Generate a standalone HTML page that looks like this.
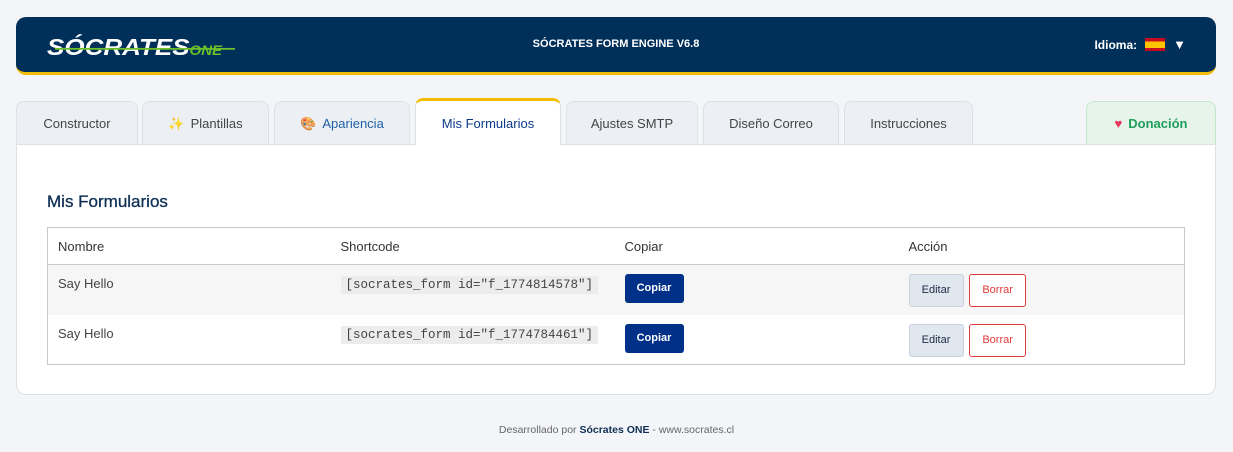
<!DOCTYPE html>
<html><head><meta charset="utf-8"><style>
*{box-sizing:border-box;margin:0;padding:0}
body{width:1233px;height:452px;background:#f3f5f8;font-family:"Liberation Sans",sans-serif;position:relative;overflow:hidden;color:#333}
.hdr{position:absolute;left:16px;top:17px;width:1200px;height:58px;background:#002f5a;border-radius:10px;border-bottom:3px solid #f2bd00}
.logo{position:absolute;left:31px;top:15px;font-weight:900;font-style:italic;font-size:26px;color:#fff;letter-spacing:0;transform:scaleY(0.9)}
.logo span{color:#6bbf2a;font-size:15px;font-weight:bold;letter-spacing:0}
.logo i{position:absolute;left:8px;top:16px;width:180px;height:2px;background:#6bbf2a}
.title{position:absolute;left:0;width:1200px;top:21px;text-align:center;color:#fff;font-weight:bold;font-size:11px}
.lang{position:absolute;right:30px;top:20px;color:#fff;font-weight:bold;font-size:12px;display:flex;align-items:center;gap:8px}
.flag{width:20px;height:13px;background:linear-gradient(#c60b1e 0 25%,#ffc400 25% 75%,#c60b1e 75%)}
.tab{position:absolute;top:101px;height:44px;background:#eceff3;border:1px solid #dde1e6;border-bottom:none;border-radius:8px 8px 0 0;font-size:13px;color:#444;display:flex;align-items:center;justify-content:center;gap:6px}
.tab.act{top:98px;height:47px;background:#fff;border-top:3px solid #f2bd00;color:#0b3a8a;z-index:2}
.panel{position:absolute;left:16px;top:144px;width:1200px;height:251px;background:#fff;border:1px solid #dde1e6;border-radius:0 0 10px 10px}
h2{position:absolute;left:47px;top:192px;font-size:17px;font-weight:normal;color:#0f2f55;-webkit-text-stroke:0.3px #0f2f55}
table{position:absolute;left:47px;top:227px;width:1138px;border-collapse:collapse;border:1px solid #c8c8c8;font-size:13px}
th{text-align:left;font-weight:normal;height:37px;padding-left:10px;border-bottom:1px solid #c8c8c8;color:#333}
td{height:50px;padding-left:10px;vertical-align:top;padding-top:11px}
td.b{padding-top:9px}
tr.g td{background:#f5f6f5}
code{font-family:"Liberation Mono",monospace;font-size:12.5px;background:#ececec;color:#444;padding:2px 5px}
.cp{display:inline-block;background:#003087;color:#fff;font-size:11px;font-weight:bold;width:59px;height:29px;line-height:29px;text-align:center;border-radius:3px}
.ed{display:inline-block;background:#e1e7ef;border:1px solid #c8d1dc;color:#1a2a44;font-size:11px;width:55px;height:33px;line-height:31px;text-align:center;border-radius:3px;vertical-align:top}
.bo{display:inline-block;background:#fff;border:1px solid #e03a3a;color:#e03a3a;font-size:11px;width:57px;height:33px;line-height:31px;text-align:center;border-radius:3px;margin-left:2px;vertical-align:top}
.foot{position:absolute;top:424px;width:1233px;text-align:center;font-size:10.5px;color:#666}
.foot b{color:#0f2f55}
</style></head><body>
<div class="hdr">
<div class="logo">SÓCRATES<span>ONE</span><i></i></div>
<div class="title">SÓCRATES FORM ENGINE V6.8</div>
<div class="lang">Idioma: <div class="flag"></div><span style="font-size:13px">▼</span></div>
</div>
<div class="tab" style="left:16px;width:122px">Constructor</div>
<div class="tab" style="left:142px;width:127px"><span style="color:#f5a623">✨</span>Plantillas</div>
<div class="tab" style="left:274px;width:136px;color:#1f5fa8"><span style="color:#e58">🎨</span>Apariencia</div>
<div class="tab act" style="left:415px;width:146px">Mis Formularios</div>
<div class="tab" style="left:566px;width:132px">Ajustes SMTP</div>
<div class="tab" style="left:703px;width:136px">Diseño Correo</div>
<div class="tab" style="left:844px;width:129px">Instrucciones</div>
<div class="tab" style="left:1086px;width:130px;background:#e6f4ea;border-color:#c3e6cb;color:#1e9e5a;font-weight:bold"><span style="color:#e8335a">♥</span>Donación</div>
<div class="panel"></div>
<h2>Mis Formularios</h2>
<table>
<tr><th style="width:283px">Nombre</th><th style="width:284px">Shortcode</th><th style="width:284px">Copiar</th><th>Acción</th></tr>
<tr class="g"><td style="color:#444">Say Hello</td><td><code>[socrates_form id="f_1774814578"]</code></td><td class="b"><span class="cp">Copiar</span></td><td class="b"><span class="ed">Editar</span> <span class="bo">Borrar</span></td></tr>
<tr><td style="color:#444">Say Hello</td><td><code>[socrates_form id="f_1774784461"]</code></td><td class="b"><span class="cp">Copiar</span></td><td class="b"><span class="ed">Editar</span> <span class="bo">Borrar</span></td></tr>
</table>
<div class="foot">Desarrollado por <b>Sócrates ONE</b> - www.socrates.cl</div>
</body></html>
